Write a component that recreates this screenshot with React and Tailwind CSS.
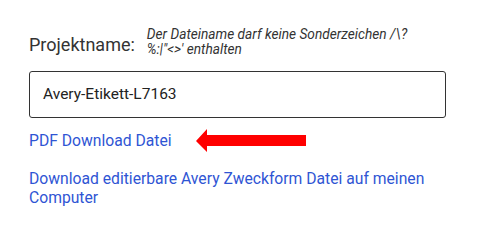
export default function App() {
  return (
    <div className="w-[486px] h-[245px] bg-white pl-[29px] pt-[25px]" style={{ fontFamily: "Roboto, sans-serif" }}>
      <div className="flex items-start gap-[12px]">
        <div className="text-[18px] leading-[22px] text-[#333] pt-[9px]">Projektname:</div>
        <div className="text-[13.7px] leading-[15px] italic text-[#333] w-[275px] pt-[2px]">
          Der Dateiname darf keine Sonderzeichen /\? %:|"&lt;&gt;' enthalten
        </div>
      </div>
      <div className="mt-[14px] w-[417px] h-[47px] border border-[#333] rounded-[3px] flex items-center pl-[13px] text-[15.5px] text-[#222]">
        Avery-Etikett-L7163
      </div>
      <div className="mt-[11px] flex items-center">
        <a className="text-[15.7px] leading-[20px] text-[#2f55d4]">PDF Download Datei</a>
        <svg width="112" height="24" viewBox="0 0 112 24" className="ml-[24px]">
          <polygon points="0,12 11,0 11,6 110,6 110,17 11,17 11,23" fill="#ff0000" />
        </svg>
      </div>
      <div className="mt-[16px] w-[420px] text-[15.7px] leading-[19px] text-[#2f55d4]">
        Download editierbare Avery Zweckform Datei auf meinen Computer
      </div>
    </div>
  );
}
